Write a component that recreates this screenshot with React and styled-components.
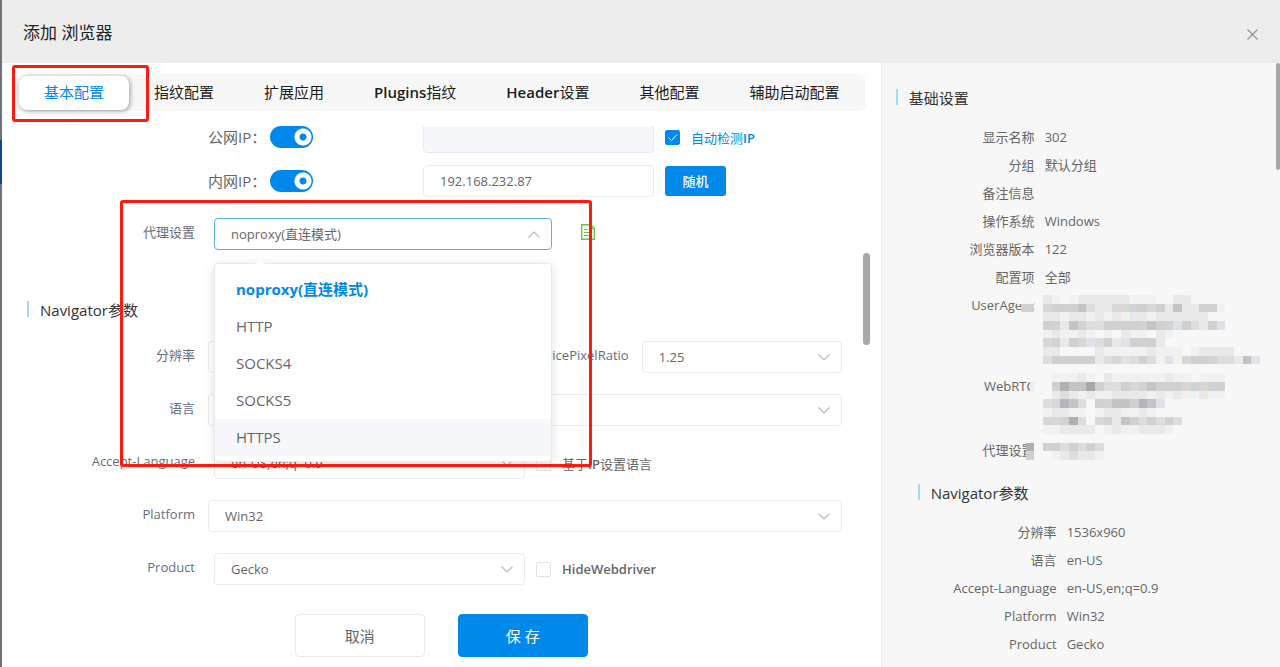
import React, { useState } from 'react';
import styled, { createGlobalStyle, css } from 'styled-components';

const GlobalStyle = createGlobalStyle`
  * {
    box-sizing: border-box;
  }
  body {
    margin: 0;
    color: #666666;
    font-family: 'Open Sans', 'Noto Sans CJK SC', sans-serif;
    font-size: 13px;
    background: #ffffff;
  }
  button,
  input,
  select {
    font: inherit;
    color: inherit;
  }
`;

const Backdrop = styled.div`
  height: 100vh;
  padding-left: 2px;
  background: linear-gradient(
    #6d7178 140px,
    #0b4a8e 140px,
    #0b4a8e 184px,
    #6d7178 184px
  );
`;

const Dialog = styled.div`
  position: relative;
  display: flex;
  flex-direction: column;
  height: 100%;
  background: #ffffff;
`;

const Header = styled.header`
  display: flex;
  flex: none;
  align-items: center;
  justify-content: space-between;
  height: 63px;
  padding: 0 21px;
  background: #ededed;
`;

const Title = styled.h1`
  margin: 0;
  font-size: 17px;
  font-weight: 400;
  color: #222222;
`;

const CloseButton = styled.button`
  display: flex;
  margin-top: 5px;
  padding: 0;
  border: 0;
  background: none;
  color: #909399;
`;

const Body = styled.div`
  display: grid;
  flex: 1;
  grid-template-columns: 11fr 5fr;
  min-height: 0;
`;

const Main = styled.main`
  display: flex;
  flex-direction: column;
  min-width: 0;
  min-height: 0;
`;

const Tabs = styled.nav`
  display: flex;
  flex: none;
  align-items: center;
  height: 37px;
  margin: 11px 15px 0;
  padding: 0 2px;
  border-radius: 8px;
  background: #f7f7f7;
`;

const Tab = styled.button`
  height: 34px;
  padding: 0 25px 2px;
  border: 0;
  border-radius: 8px;
  background: none;
  font-size: 15px;
  color: #1c1c1c;
  white-space: nowrap;
  ${({ $active }) =>
    $active &&
    css`
      background: #ffffff;
      color: #0088ea;
      box-shadow: 1px 1px 5px rgba(0, 0, 0, 0.4);
    `}
`;

const Latin = styled.span`
  font-weight: 600;
`;

const ScrollArea = styled.div`
  display: flex;
  flex: 1;
  min-height: 0;
  margin: 15px 11px 0 0;
  overflow: hidden;
`;

const Form = styled.form`
  flex: 1;
  min-width: 0;
  margin-top: -5px;
  padding-right: 21px;
`;

const ScrollThumb = styled.div`
  flex: none;
  width: ${({ $width }) => $width}px;
  height: ${({ $height }) => $height}px;
  margin-top: ${({ $top }) => $top}px;
  border-radius: 4px;
  background: #a8a8a8;
`;

const FormRow = styled.div`
  display: flex;
  height: 32px;
  margin-bottom: ${({ $tight }) => ($tight ? 12 : 21)}px;
`;

const RowLabel = styled.label`
  flex: none;
  width: 193px;
  margin-right: 13px;
  line-height: 28px;
  text-align: right;
  color: #666c80;
`;

const InlineLabel = styled.label`
  flex: 1;
  align-self: flex-start;
  margin-right: 13px;
  line-height: 28px;
  text-align: right;
  color: #666c80;
`;

const Content = styled.div`
  display: flex;
  flex: 1;
  align-items: center;
  min-width: 0;
  padding-left: ${({ $indent }) => ($indent ? 6 : 0)}px;
`;

const SwitchLabel = styled.label`
  flex: none;
  width: 62px;
  padding-bottom: 2px;
  font-size: 15px;
  white-space: nowrap;
`;

const Switch = styled.input`
  flex: none;
  width: 43px;
  height: 22px;
  margin: 0 110px 0 0;
  border-radius: 11px;
  appearance: none;
  background: radial-gradient(
    circle at 33px 11px,
    #0088ea 3px,
    #ffffff 4px,
    #ffffff 8px,
    #0088ea 9px
  );
`;

const TextInput = styled.input`
  width: 231px;
  height: 32px;
  padding: 0 16px;
  border: 1px solid #e8eaee;
  border-radius: 4px;
  background: #ffffff;
  &:disabled {
    background: #f5f7fb;
  }
`;

const RandomButton = styled.button`
  width: 61px;
  height: 30px;
  margin-left: 11px;
  padding: 0 0 2px;
  border: 0;
  border-radius: 3px;
  background: #0088ea;
  color: #ffffff;
  font-weight: 500;
`;

const CheckLabel = styled.label`
  display: flex;
  align-items: center;
  gap: 11px;
  margin-left: 11px;
  color: ${({ $checked }) => ($checked ? '#0088ea' : '#666666')};
  white-space: nowrap;
`;

const CheckFrame = styled.span`
  position: relative;
  display: flex;
  svg {
    position: absolute;
    inset: 0;
  }
`;

const Check = styled.input`
  width: 15px;
  height: 15px;
  margin: 0;
  border: 1px solid #e0e2e7;
  border-radius: 2px;
  appearance: none;
  background: #ffffff;
  &:checked {
    border-color: #0088ea;
    background: #0088ea;
  }
`;

const SelectFrame = styled.div`
  position: relative;
  flex: ${({ $width }) => ($width ? `0 0 ${$width}px` : 1)};
  > svg {
    position: absolute;
    top: 13px;
    right: 12px;
    pointer-events: none;
  }
`;

const Select = styled.select`
  display: block;
  width: 100%;
  height: 32px;
  padding: 0 32px 0 16px;
  border: 1px solid ${({ $open }) => ($open ? '#58aff0' : '#e8eaee')};
  border-radius: 4px;
  appearance: none;
  background: #ffffff;
`;

const Dropdown = styled.ul`
  position: absolute;
  z-index: 2;
  top: 45px;
  left: 0;
  width: 100%;
  margin: 0;
  padding: 7px 0 5px;
  border: 1px solid #e6e8ee;
  border-radius: 4px;
  background: #ffffff;
  box-shadow: 0 2px 12px rgba(0, 0, 0, 0.12);
  list-style: none;
  &::before {
    position: absolute;
    top: -5px;
    left: 40px;
    border: 5px solid transparent;
    border-top: 0;
    border-bottom-color: #ffffff;
    content: '';
  }
`;

const Option = styled.li`
  height: 37px;
  padding-left: 21px;
  line-height: 37px;
  font-size: 15px;
  font-weight: ${({ $selected }) => ($selected ? 700 : 400)};
  color: ${({ $selected }) => ($selected ? '#0088ea' : '#666666')};
  background: ${({ $hovered }) => ($hovered ? '#f5f7fb' : 'none')};
`;

const NoteButton = styled.button`
  display: flex;
  margin: 0 0 4px 29px;
  padding: 0;
  border: 0;
  background: none;
`;

const SectionTitle = styled.h2`
  display: flex;
  align-items: center;
  gap: 11px;
  height: 22px;
  margin: ${({ $top }) => $top}px 0 ${({ $bottom }) => $bottom}px;
  padding: 0 0 2px ${({ $left }) => $left}px;
  font-size: 15px;
  font-weight: 400;
  color: #333333;
  &::before {
    width: 2px;
    height: 16px;
    background: #a6d8ff;
    content: '';
  }
`;

const Footer = styled.footer`
  display: flex;
  flex: none;
  justify-content: center;
  gap: 33px;
  padding: 14px 0 10px;
`;

const FooterButton = styled.button`
  width: 130px;
  height: 43px;
  border: 1px solid ${({ $primary }) => ($primary ? '#0088ea' : '#e8eaee')};
  border-radius: 4px;
  background: ${({ $primary }) => ($primary ? '#0088ea' : '#ffffff')};
  color: ${({ $primary }) => ($primary ? '#ffffff' : '#666666')};
  font-size: 15px;
`;

const Aside = styled.aside`
  display: flex;
  min-height: 0;
  border-left: 1px solid #ececec;
  background: #f7f7f7;
  overflow: hidden;
`;

const Summary = styled.div`
  flex: 1;
  padding-top: 24px;
`;

const SummaryList = styled.dl`
  position: relative;
  margin: 0;
  padding-left: ${({ $indent }) => ($indent ? 22 : 0)}px;
`;

const SummaryItem = styled.div`
  display: flex;
  gap: 10px;
  height: ${({ $height }) => $height || 28}px;
  line-height: 28px;
  dt {
    width: 153px;
    text-align: right;
  }
  dd {
    margin: 0;
  }
`;

const MosaicFrame = styled.svg`
  position: absolute;
  top: 172px;
  left: 135px;
`;

const Mark = styled.div`
  position: absolute;
  z-index: 3;
  top: ${({ $y }) => $y}px;
  left: ${({ $x }) => $x}px;
  width: ${({ $w }) => $w}px;
  height: ${({ $h }) => $h}px;
  border: 3px solid #ff1a10;
  border-radius: 3px;
  pointer-events: none;
`;

const TABS = [
  '基本配置',
  '指纹配置',
  '扩展应用',
  'Plugins指纹',
  'Header设置',
  '其他配置',
  '辅助启动配置',
];

const PROXY_MODES = ['noproxy(直连模式)', 'HTTP', 'SOCKS4', 'SOCKS5', 'HTTPS'];

const BASIC = [
  ['显示名称', '302'],
  ['分组', '默认分组'],
  ['备注信息', ''],
  ['操作系统', 'Windows'],
  ['浏览器版本', '122'],
  ['配置项', '全部'],
  ['UserAgent', '', 81],
  ['WebRTC', '', 64],
  ['代理设置', ''],
];

const NAVIGATOR = [
  ['分辨率', '1536x960'],
  ['语言', 'en-US'],
  ['Accept-Language', 'en-US,en;q=0.9'],
  ['Platform', 'Win32'],
  ['Product', 'Gecko'],
];

// one letter per tile, from light to dark, plus a few tinted ones
const TONES = {
  z: '#f7f7f7',
  a: '#f1f1f1',
  b: '#e9e9e9',
  c: '#dddddd',
  d: '#d0d0d0',
  e: '#c4c4c4',
  f: '#b0b0b0',
  n: '#a8a8a8',
  g: '#b1b5be',
  s: '#ced3d7',
  l: '#dfe3e9',
  w: '#dad6d3',
};

// tiles that only cover the right half of their cell
const HALF_TONES = { h: '#d0d0d0', k: '#ececec' };

const TILES = [
  'zz.ba.abbbbbbaaa..bb........',
  'hd.wsddecbbwwsdwdbebbdda....',
  '...bbabbabababbabbbbbb......',
  '...dsbesccddddsedsldcbdl....',
  '...abaaba.a.baa.ba..........',
  '...wsbdwlcdbldddb...........',
  '...bb....baaaaabaaa.abbbb...',
  '...cdddddbcwlcscalawddsccbel',
  '............................',
  '....aaaba.baaaaaabaa.aaa....',
  '.k..dfeendccdwsedddwswsd....',
  '....bcbabaabbbbababaabaa....',
  '...cwgec.dseedgel...........',
  '...abbaa.abbaaba............',
  '...wwsfc.wsbedcdcdc.........',
  '...aabbbb.abaabbba..........',
  '............................',
  '.f.ddcdcdc..................',
  '.d..abcbba..................',
];

const Mosaic = () => (
  <MosaicFrame
    width="243"
    height="165"
    viewBox="0 0 28 19"
    preserveAspectRatio="none"
    shapeRendering="crispEdges"
    aria-hidden="true"
  >
    {TILES.map((line, y) =>
      line.split('').map((tone, x) => {
        if (tone === '.') return null;
        const half = HALF_TONES[tone];
        return (
          <rect
            key={`${x}-${y}`}
            x={half ? x + 0.5 : x}
            y={y}
            width={half ? 0.5 : 1}
            height="1"
            fill={half || TONES[tone]}
          />
        );
      })
    )}
  </MosaicFrame>
);

// Latin words are set heavier than the Chinese text around them
const MixedText = ({ text }) => (
  <span>
    {text.split(/([A-Za-z]+)/).map((part, i) =>
      i % 2 ? <Latin key={part}>{part}</Latin> : part
    )}
  </span>
);

const Chevron = ({ up }) => (
  <svg width="12" height="7" viewBox="0 0 12 7" fill="none" stroke="#b4b8c2">
    <path
      d={up ? 'M0.5 6.5 6 1l5.5 5.5' : 'M0.5 0.5 6 6l5.5-5.5'}
      strokeWidth="1.2"
    />
  </svg>
);

const SelectField = ({ id, value, width, open, children }) => (
  <SelectFrame $width={width}>
    <Select id={id} defaultValue={value} $open={open}>
      <option>{value}</option>
    </Select>
    <Chevron up={open} />
    {children}
  </SelectFrame>
);

const CheckField = ({ label, defaultChecked = false }) => {
  const [checked, setChecked] = useState(defaultChecked);
  return (
    <CheckLabel $checked={checked}>
      <CheckFrame>
        <Check
          type="checkbox"
          checked={checked}
          onChange={(e) => setChecked(e.target.checked)}
        />
        {checked && (
          <svg width="15" height="15" viewBox="0 0 15 15" fill="none" stroke="#fff">
            <path d="m3.5 7.5 3 3 5.5-6" />
          </svg>
        )}
      </CheckFrame>
      <MixedText text={label} />
    </CheckLabel>
  );
};

const SummaryGroup = ({ items, indent, children }) => (
  <SummaryList $indent={indent}>
    {items.map(([name, value, height]) => (
      <SummaryItem key={name} $height={height}>
        <dt>{name}</dt>
        <dd>{value}</dd>
      </SummaryItem>
    ))}
    {children}
  </SummaryList>
);

const App = () => {
  const [tab, setTab] = useState(TABS[0]);
  const [mode, setMode] = useState(PROXY_MODES[0]);

  return (
    <Backdrop>
      <GlobalStyle />
      <Dialog role="dialog" aria-labelledby="title">
        <Header>
          <Title id="title">添加 浏览器</Title>
          <CloseButton type="button" aria-label="关闭">
            <svg width="13" height="13" viewBox="0 0 13 13" fill="none" stroke="currentColor">
              <path d="m1.5 1.5 10 10m0-10-10 10" strokeWidth="1.2" />
            </svg>
          </CloseButton>
        </Header>
        <Body>
          <Main>
            <Tabs>
              {TABS.map((name) => (
                <Tab
                  key={name}
                  type="button"
                  $active={name === tab}
                  onClick={() => setTab(name)}
                >
                  <MixedText text={name} />
                </Tab>
              ))}
            </Tabs>
            <ScrollArea>
              <Form id="profile">
                <FormRow $tight>
                  <RowLabel as="span" />
                  <Content>
                    <SwitchLabel htmlFor="public-ip">公网IP：</SwitchLabel>
                    <Switch id="public-ip" type="checkbox" role="switch" defaultChecked />
                    <TextInput aria-label="公网IP" disabled />
                    <CheckField label="自动检测IP" defaultChecked />
                  </Content>
                </FormRow>
                <FormRow>
                  <RowLabel as="span" />
                  <Content>
                    <SwitchLabel htmlFor="local-ip">内网IP：</SwitchLabel>
                    <Switch id="local-ip" type="checkbox" role="switch" defaultChecked />
                    <TextInput aria-label="内网IP" defaultValue="192.168.232.87" />
                    <RandomButton type="button">随机</RandomButton>
                  </Content>
                </FormRow>
                <FormRow>
                  <RowLabel htmlFor="proxy">代理设置</RowLabel>
                  <Content $indent>
                    <SelectField key={mode} id="proxy" value={mode} width={338} open>
                      <Dropdown role="listbox">
                        {PROXY_MODES.map((name) => (
                          <Option
                            key={name}
                            role="option"
                            aria-selected={name === mode}
                            $selected={name === mode}
                            $hovered={name === 'HTTPS'}
                            onClick={() => setMode(name)}
                          >
                            {name}
                          </Option>
                        ))}
                      </Dropdown>
                    </SelectField>
                    <NoteButton type="button" aria-label="备注">
                      <svg width="14" height="16" viewBox="0 0 14 16" fill="none" stroke="#6cc644">
                        <path d="M0.7 0.7h9l3.6 3.6v11H0.7z" strokeWidth="1.4" />
                        <path d="M9.5 0.7v4h4M3 5.5h4M3 8.5h7M3 11.5h7" strokeWidth="1.2" />
                      </svg>
                    </NoteButton>
                  </Content>
                </FormRow>
                <SectionTitle $top={49} $bottom={20} $left={25}>
                  Navigator参数
                </SectionTitle>
                <FormRow>
                  <RowLabel htmlFor="screen">分辨率</RowLabel>
                  <Content>
                    <SelectField id="screen" value="1536x960" width={200} />
                    <InlineLabel htmlFor="ratio">DevicePixelRatio</InlineLabel>
                    <SelectField id="ratio" value="1.25" width={200} />
                  </Content>
                </FormRow>
                <FormRow>
                  <RowLabel htmlFor="language">语言</RowLabel>
                  <Content>
                    <SelectField id="language" value="en-US" />
                  </Content>
                </FormRow>
                <FormRow>
                  <RowLabel htmlFor="accept">Accept-Language</RowLabel>
                  <Content $indent>
                    <SelectField id="accept" value="en-US,en;q=0.9" width={311} />
                    <CheckField label="基于IP设置语言" />
                  </Content>
                </FormRow>
                <FormRow>
                  <RowLabel htmlFor="platform">Platform</RowLabel>
                  <Content>
                    <SelectField id="platform" value="Win32" />
                  </Content>
                </FormRow>
                <FormRow>
                  <RowLabel htmlFor="product">Product</RowLabel>
                  <Content $indent>
                    <SelectField id="product" value="Gecko" width={311} />
                    <CheckField label="HideWebdriver" />
                  </Content>
                </FormRow>
              </Form>
              <ScrollThumb $width={7} $height={92} $top={127} />
            </ScrollArea>
            <Footer>
              <FooterButton type="button">取消</FooterButton>
              <FooterButton type="submit" form="profile" $primary>
                保 存
              </FooterButton>
            </Footer>
          </Main>
          <Aside>
            <Summary>
              <SectionTitle $top={0} $bottom={14} $left={14}>
                基础设置
              </SectionTitle>
              <SummaryGroup items={BASIC}>
                <Mosaic />
              </SummaryGroup>
              <SectionTitle $top={18} $bottom={14} $left={36}>
                Navigator参数
              </SectionTitle>
              <SummaryGroup items={NAVIGATOR} indent />
            </Summary>
            <ScrollThumb $width={4} $height={107} $top={0} />
          </Aside>
        </Body>
        <Mark $x={10} $y={65} $w={137} $h={57} />
        <Mark $x={118} $y={200} $w={472} $h={267} />
      </Dialog>
    </Backdrop>
  );
};

export default App;
